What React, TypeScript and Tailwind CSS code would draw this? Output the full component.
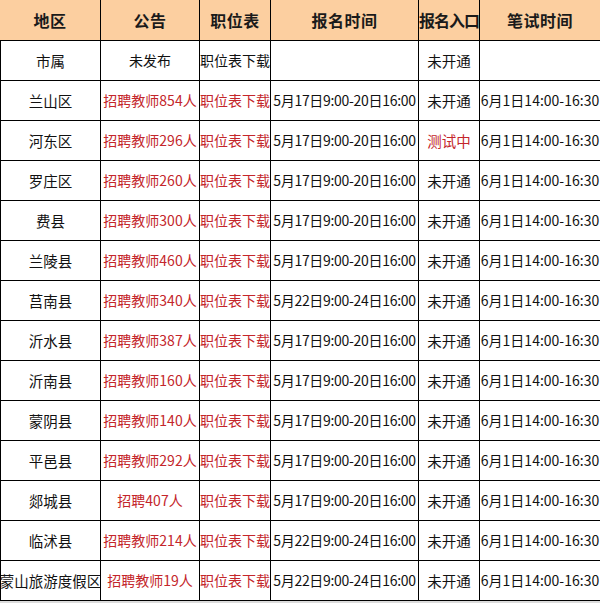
import React from "react";

type Row = {
  area: string;
  notice: string;
  noticeRed: boolean;
  posRed: boolean;
  time: string;
  entry: string;
  entryRed?: boolean;
  exam: string;
};

const T1 = "5月17日9:00-20日16:00";
const T2 = "5月22日9:00-24日16:00";
const EX = "6月1日14:00-16:30";

const rows: Row[] = [
  { area: "市属", notice: "未发布", noticeRed: false, posRed: false, time: "", entry: "未开通", exam: "" },
  { area: "兰山区", notice: "招聘教师854人", noticeRed: true, posRed: true, time: T1, entry: "未开通", exam: EX },
  { area: "河东区", notice: "招聘教师296人", noticeRed: true, posRed: true, time: T1, entry: "测试中", entryRed: true, exam: EX },
  { area: "罗庄区", notice: "招聘教师260人", noticeRed: true, posRed: true, time: T1, entry: "未开通", exam: EX },
  { area: "费县", notice: "招聘教师300人", noticeRed: true, posRed: true, time: T1, entry: "未开通", exam: EX },
  { area: "兰陵县", notice: "招聘教师460人", noticeRed: true, posRed: true, time: T1, entry: "未开通", exam: EX },
  { area: "莒南县", notice: "招聘教师340人", noticeRed: true, posRed: true, time: T2, entry: "未开通", exam: EX },
  { area: "沂水县", notice: "招聘教师387人", noticeRed: true, posRed: true, time: T1, entry: "未开通", exam: EX },
  { area: "沂南县", notice: "招聘教师160人", noticeRed: true, posRed: true, time: T1, entry: "未开通", exam: EX },
  { area: "蒙阴县", notice: "招聘教师140人", noticeRed: true, posRed: true, time: T1, entry: "未开通", exam: EX },
  { area: "平邑县", notice: "招聘教师292人", noticeRed: true, posRed: true, time: T1, entry: "未开通", exam: EX },
  { area: "郯城县", notice: "招聘407人", noticeRed: true, posRed: true, time: T1, entry: "未开通", exam: EX },
  { area: "临沭县", notice: "招聘教师214人", noticeRed: true, posRed: true, time: T2, entry: "未开通", exam: EX },
  { area: "蒙山旅游度假区", notice: "招聘教师19人", noticeRed: true, posRed: true, time: T2, entry: "未开通", exam: EX },
];

const grid = "grid grid-cols-[101px_99px_71px_148px_61px_120px]";
const cell =
  "flex items-center justify-center overflow-hidden whitespace-nowrap border-b border-r border-black";

const RED = "text-[#c4262b]";
const BLACK = "text-[#111]";

export default function App() {
  const headers = ["地区", "公告", "职位表", "报名时间", "报名入口", "笔试时间"];
  return (
    <div
      className="w-[600px] h-[603px] bg-[#dcdcdc]"
      style={{ fontFamily: '"Noto Sans CJK SC", "Noto Sans", sans-serif' }}
    >
      <div className="bg-white">
        <div className={`${grid} h-[41px] bg-[#fccfa0]`}>
          {headers.map((h, i) => (
            <div
              key={h}
              className={`${cell} ${i === 5 ? "border-r-0" : ""} text-[16px] font-bold text-[#1a1a1a] ${i === 4 ? "tracking-[-1px]" : "tracking-[0.5px]"}`}
            >
              {h}
            </div>
          ))}
        </div>
        {rows.map((r) => (
          <div key={r.area} className={`${grid} h-10 text-[14.5px]`}>
            <div className={`${cell} border-l ${BLACK}`}>{r.area}</div>
            <div className={`${cell} ${r.noticeRed ? RED : BLACK} text-[14px]`}>{r.notice}</div>
            <div className={`${cell} ${r.posRed ? RED : BLACK} text-[14px]`}>职位表下载</div>
            <div className={`${cell} ${BLACK} text-[14px] tracking-[-0.3px]`}>{r.time}</div>
            <div className={`${cell} ${r.entryRed ? RED : BLACK}`}>{r.entry}</div>
            <div className={`${cell} border-r-0 ${BLACK} text-[14px]`}>{r.exam}</div>
          </div>
        ))}
      </div>
    </div>
  );
}
